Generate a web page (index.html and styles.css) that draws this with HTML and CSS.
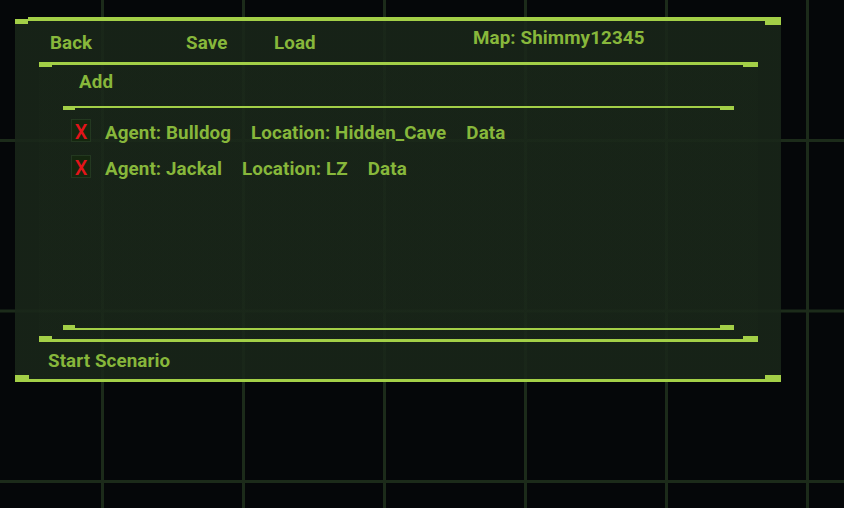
FILE: index.html
```html
<!DOCTYPE html>
<html>
<head>
<meta charset="utf-8">
<link rel="stylesheet" href="styles.css">
</head>
<body>
<div class="window">
  <div class="toolbar">
    <span class="btn btn-back">Back</span>
    <span class="btn btn-save">Save</span>
    <span class="btn btn-load">Load</span>
    <span class="map-name">Map: Shimmy12345</span>
  </div>
  <div class="editor">
    <div class="add-row"><span class="btn">Add</span></div>
    <div class="list">
      <div class="row">
        <span class="remove">X</span>
        <span class="field">Agent: Bulldog</span>
        <span class="field">Location: Hidden_Cave</span>
        <span class="field">Data</span>
      </div>
      <div class="row">
        <span class="remove">X</span>
        <span class="field">Agent: Jackal</span>
        <span class="field">Location: LZ</span>
        <span class="field">Data</span>
      </div>
    </div>
  </div>
  <div class="footer"><span class="btn">Start Scenario</span></div>
</div>
</body>
</html>
```
FILE: styles.css
```css
html, body {
  margin: 0;
  height: 100%;
}
body {
  --grid: #1c2b1a;
  --lime: #a3cf47;
  --text: #87b73b;
  background-color: #050709;
  background-image:
    linear-gradient(to right, var(--grid) 3px, transparent 3px),
    linear-gradient(to bottom, var(--grid) 3px, transparent 3px);
  background-size: 141px 100%, 100% 170.5px;
  background-position: 101px 0, 0 139px;
  font-family: Roboto, "Liberation Sans", sans-serif;
  font-weight: 700;
  font-size: 18.8px;
  letter-spacing: 0.1px;
  line-height: 21px;
  color: var(--text);
  overflow: hidden;
  padding-top: 17px;
  box-sizing: border-box;
}
.window {
  --panel: rgba(25, 38, 25, 0.88);
  margin-left: 15px;
  width: 766px;
  height: 365px;
  box-sizing: border-box;
  padding: 4px 0 3px;
  display: flex;
  flex-direction: column;
  background:
    linear-gradient(var(--lime), var(--lime)) 13px 0 / 737px 4px no-repeat,
    linear-gradient(var(--lime), var(--lime)) 0 2px / 13px 5px no-repeat,
    linear-gradient(var(--lime), var(--lime)) 750px 0 / 16px 8px no-repeat,
    linear-gradient(var(--lime), var(--lime)) 13px 362px / 737px 3px no-repeat,
    linear-gradient(var(--lime), var(--lime)) 0 358px / 14px 7px no-repeat,
    linear-gradient(var(--lime), var(--lime)) 750px 358px / 16px 7px no-repeat,
    linear-gradient(var(--panel), var(--panel)) 0 4px / 100% 358px no-repeat;
}
.toolbar {
  height: 41px;
  display: flex;
  align-items: center;
  flex-shrink: 0;
  padding-left: 35px;
  padding-top: 3px;
  box-sizing: border-box;
}
.btn {
  white-space: nowrap;
}
.btn-back { width: 136px; flex-shrink: 0; }
.btn-save { width: 88px; flex-shrink: 0; }
.btn-load { width: 199px; flex-shrink: 0; }
.map-name {
  white-space: nowrap;
  align-self: flex-start;
  margin-top: 4px;
}
.editor {
  margin-left: 24px;
  width: 719px;
  height: 280px;
  flex-shrink: 0;
  box-sizing: border-box;
  background:
    linear-gradient(var(--lime), var(--lime)) 13px 0 / 691px 3px no-repeat,
    linear-gradient(var(--lime), var(--lime)) 0 0 / 13px 5px no-repeat,
    linear-gradient(var(--lime), var(--lime)) 704px 0 / 15px 5px no-repeat,
    linear-gradient(var(--lime), var(--lime)) 13px 277px / 691px 3px no-repeat,
    linear-gradient(var(--lime), var(--lime)) 0 274px / 13px 6px no-repeat,
    linear-gradient(var(--lime), var(--lime)) 704px 274px / 15px 6px no-repeat,
    linear-gradient(rgba(30, 46, 28, 0.12), rgba(30, 46, 28, 0.12)) 0 3px / 100% 274px no-repeat;
}
.add-row {
  height: 44px;
  box-sizing: border-box;
  padding: 10px 0 0 40px;
}
.list {
  margin-left: 24px;
  width: 671px;
  height: 224px;
  box-sizing: border-box;
  padding: 13px 0 0 8px;
  display: flex;
  flex-direction: column;
  gap: 13px;
  background:
    linear-gradient(var(--lime), var(--lime)) 12px 0 / 645px 2px no-repeat,
    linear-gradient(var(--lime), var(--lime)) 0 0 / 12px 4px no-repeat,
    linear-gradient(var(--lime), var(--lime)) 657px 0 / 14px 4px no-repeat,
    linear-gradient(var(--lime), var(--lime)) 12px 222px / 645px 2px no-repeat,
    linear-gradient(var(--lime), var(--lime)) 0 219px / 12px 5px no-repeat,
    linear-gradient(var(--lime), var(--lime)) 657px 219px / 14px 5px no-repeat;
}
.row {
  display: flex;
  align-items: flex-start;
  height: 23px;
  gap: 20px;
}
.remove {
  width: 20px;
  height: 23px;
  box-sizing: border-box;
  background: #15270f;
  border: 1px solid #233820;
  color: #e3141a;
  font-size: 20px;
  font-weight: 500;
  letter-spacing: 0;
  line-height: 24px;
  text-align: center;
  margin-right: -6px;
}
.field {
  padding-top: 4px;
  white-space: nowrap;
}
.footer {
  height: 37px;
  box-sizing: border-box;
  padding: 9px 0 0 33px;
}
```
